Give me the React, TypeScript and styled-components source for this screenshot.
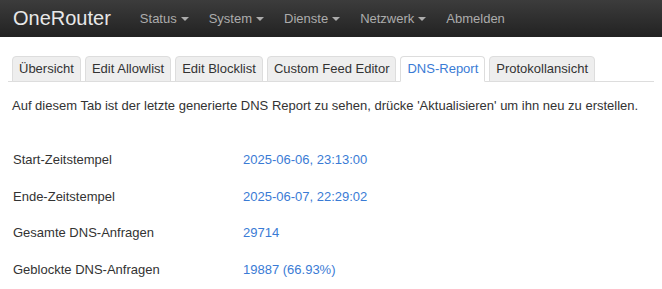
import React from "react";
import styled, { createGlobalStyle } from "styled-components";

const GlobalStyle = createGlobalStyle`
  body {
    margin: 0;
    background: #fff;
    font-family: "Liberation Sans", Arial, sans-serif;
    font-size: 13px;
    color: #333;
  }
`;

const Navbar = styled.nav`
  height: 37px;
  display: flex;
  align-items: center;
  padding-left: 13px;
  background: linear-gradient(to bottom, #3c3c3c 0%, #222 100%);
`;

const Brand = styled.div`
  font-size: 20px;
  color: #e8e8e8;
  margin-right: 19px;
`;

const NavItem = styled.div`
  display: flex;
  align-items: center;
  padding: 0 10px;
  color: #acacac;
  font-size: 13px;
`;

const Caret = styled.span`
  display: inline-block;
  margin-left: 4px;
  width: 0;
  height: 0;
  border-top: 4px solid #acacac;
  border-left: 4px solid transparent;
  border-right: 4px solid transparent;
`;

const Content = styled.div`
  padding: 19px 8px 0;
`;

const TabBar = styled.div`
  display: flex;
  padding-left: 4px;
  border-bottom: 1px solid #ddd;
`;

const Tab = styled.div<{ active?: boolean }>`
  height: 24px;
  line-height: 24px;
  padding: 0 6px;
  margin-right: 4px;
  margin-bottom: -1px;
  border: 1px solid #ddd;
  border-bottom-color: ${(p) => (p.active ? "#fff" : "#ddd")};
  border-radius: 4px 4px 0 0;
  background: ${(p) => (p.active ? "#fff" : "#eee")};
  color: ${(p) => (p.active ? "#3a7bd5" : "#333")};
`;

const Intro = styled.p`
  margin: 15px 0 27px 4px;
  line-height: 18px;
`;

const ReportTable = styled.div`
  display: grid;
  grid-template-columns: 230px 1fr;
  padding-left: 5px;
`;

const Cell = styled.div<{ value?: boolean }>`
  height: 36.5px;
  line-height: 36.5px;
  color: ${(p) => (p.value ? "#3a7bd5" : "#333")};
`;

const menu: [string, boolean][] = [
  ["Status", true],
  ["System", true],
  ["Dienste", true],
  ["Netzwerk", true],
  ["Abmelden", false],
];

const tabs = [
  "Übersicht",
  "Edit Allowlist",
  "Edit Blocklist",
  "Custom Feed Editor",
  "DNS-Report",
  "Protokollansicht",
];

const rows = [
  ["Start-Zeitstempel", "2025-06-06, 23:13:00"],
  ["Ende-Zeitstempel", "2025-06-07, 22:29:02"],
  ["Gesamte DNS-Anfragen", "29714"],
  ["Geblockte DNS-Anfragen", "19887 (66.93%)"],
];

export default function App() {
  return (
    <>
      <GlobalStyle />
      <Navbar>
        <Brand>OneRouter</Brand>
        {menu.map(([label, dropdown]) => (
          <NavItem key={label}>
            {label}
            {dropdown && <Caret />}
          </NavItem>
        ))}
      </Navbar>
      <Content>
        <TabBar>
          {tabs.map((t) => (
            <Tab key={t} active={t === "DNS-Report"}>
              {t}
            </Tab>
          ))}
        </TabBar>
        <Intro>
          Auf diesem Tab ist der letzte generierte DNS Report zu sehen, drücke
          'Aktualisieren' um ihn neu zu erstellen.
        </Intro>
        <ReportTable>
          {rows.map(([label, value]) => (
            <React.Fragment key={label}>
              <Cell>{label}</Cell>
              <Cell value>{value}</Cell>
            </React.Fragment>
          ))}
        </ReportTable>
      </Content>
    </>
  );
}
